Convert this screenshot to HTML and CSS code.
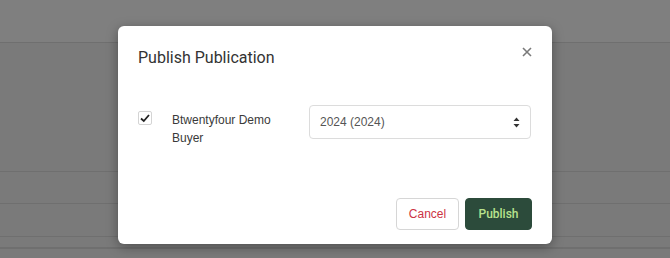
FILE: index.html
```html
<!DOCTYPE html>
<html lang="en">
<head>
    <meta charset="UTF-8">
    <meta name="viewport" content="width=device-width, initial-scale=1.0">
    <title>Publish Publication</title>
    <link rel="stylesheet" href="styles.css">
</head>
<body>
    <div class="page">
        <div class="row row-head"></div>
        <div class="row row-big"></div>
        <div class="row row-a"></div>
        <div class="row row-b"></div>
        <div class="row row-c"></div>
        <div class="row"></div>
    </div>

    <div class="modal">
        <div class="modal-header">
            <h2 class="modal-title">Publish Publication</h2>
            <button class="close" aria-label="Close">
                <svg width="10" height="10" viewBox="0 0 10 10">
                    <path d="M1 1 L9 9 M9 1 L1 9" stroke="#7a7a7a" stroke-width="1.6" fill="none"/>
                </svg>
            </button>
        </div>
        <div class="modal-body">
            <span class="check">
                <svg width="12" height="12" viewBox="0 0 12 12">
                    <path d="M2 6.5 L4.8 9 L10 3" stroke="#222" stroke-width="1.8" fill="none"/>
                </svg>
            </span>
            <div class="buyer">Btwentyfour Demo Buyer</div>
            <div class="select">
                <span>2024 (2024)</span>
                <svg width="7" height="11" viewBox="0 0 7 11">
                    <path d="M3.5 0.5 L6.5 4 L0.5 4 Z M3.5 10.5 L6.5 7 L0.5 7 Z" fill="#333"/>
                </svg>
            </div>
        </div>
        <div class="modal-footer">
            <button class="btn btn-cancel">Cancel</button>
            <button class="btn btn-publish">Publish</button>
        </div>
    </div>
</body>
</html>
```

FILE: styles.css
```css
body {
    margin: 0;
    background: #7a7a7a;
    font-family: "Liberation Sans", Arial, sans-serif;
    height: 258px;
    overflow: hidden;
}
.page {
    display: flex;
    flex-direction: column;
}
.row {
    border-bottom: 1px solid #6f6f6f;
}
.row-head {
    height: 42px;
    background: #7f7f7f;
}
.row-big {
    height: 128px;
}
.row-a {
    height: 31px;
}
.row-b {
    height: 32px;
}
.row-c {
    height: 10px;
}
.modal {
    position: absolute;
    left: 118px;
    top: 26px;
    width: 434px;
    height: 218px;
    box-sizing: border-box;
    padding: 0 20px 14px;
    background: #fff;
    border-radius: 6px;
    box-shadow: 0 3px 12px rgba(0, 0, 0, 0.35);
    display: flex;
    flex-direction: column;
}
.modal-header {
    display: flex;
    justify-content: space-between;
    align-items: flex-start;
    padding-top: 22px;
}
.modal-title {
    margin: 0;
    font-family: Roboto, "Liberation Sans", Arial, sans-serif;
    font-weight: normal;
    font-size: 16px;
    line-height: 20px;
    color: #333;
}
.close {
    border: none;
    background: none;
    padding: 0;
    margin-top: -1px;
    width: 10px;
    height: 10px;
    display: flex;
}
.modal-body {
    display: flex;
    align-items: flex-start;
    margin-top: 37px;
}
.check {
    width: 14px;
    height: 14px;
    box-sizing: border-box;
    border: 1px solid #d4d4d4;
    border-radius: 2px;
    margin-top: 6px;
    display: flex;
    align-items: center;
    justify-content: center;
}
.buyer {
    width: 120px;
    margin: 6px 17px 0 20px;
    font-size: 12px;
    line-height: 18px;
    color: #3a3a3a;
}
.select {
    flex: 1;
    height: 34px;
    box-sizing: border-box;
    margin-right: 1px;
    border: 1px solid #dcdcdc;
    border-radius: 4px;
    padding: 0 10px 0 10px;
    display: flex;
    align-items: center;
    justify-content: space-between;
    font-size: 12px;
    color: #555;
}
.modal-footer {
    margin-top: auto;
    display: flex;
    justify-content: flex-end;
    gap: 6px;
}
.btn {
    height: 32px;
    border-radius: 4px;
    font-family: "Liberation Sans", Arial, sans-serif;
    font-size: 12px;
    cursor: pointer;
}
.btn-cancel {
    width: 63px;
    background: #fff;
    border: 1px solid #d6d6d6;
    color: #cc3344;
}
.btn-publish {
    width: 67px;
    background: #2c4b3b;
    border: 1px solid #2c4b3b;
    color: #b8e38e;
    font-family: Roboto, "Liberation Sans", Arial, sans-serif;
    font-weight: 500;
}
```
